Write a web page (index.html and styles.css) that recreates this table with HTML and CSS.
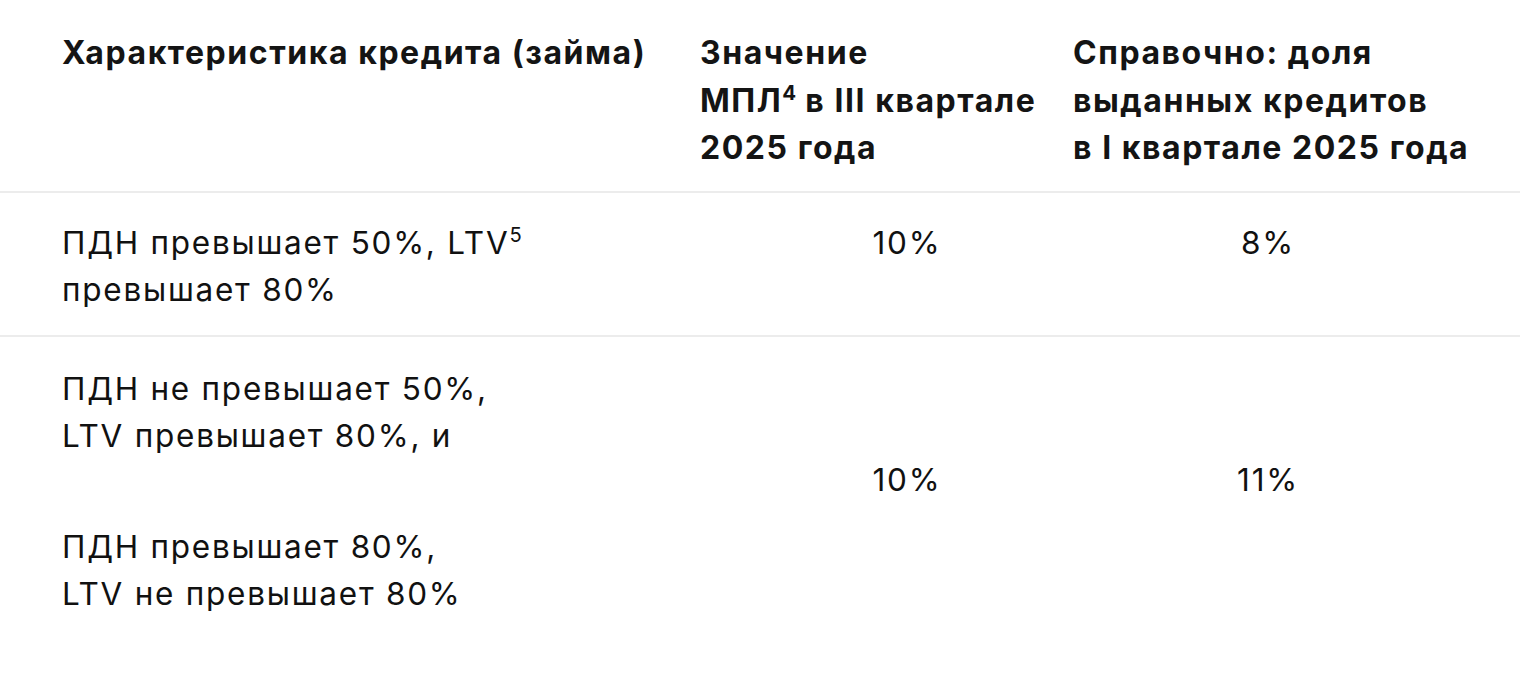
FILE: index.html
```html
<!DOCTYPE html>
<html lang="ru">
<head>
<meta charset="utf-8">
<title>МПЛ</title>
<link rel="stylesheet" href="styles.css">
</head>
<body>
<div class="table">
  <div class="row head">
    <div class="cell">Характеристика кредита (займа)</div>
    <div class="cell">Значение<br>МПЛ<sup>4</sup> в&nbsp;III квартале<br>2025 года</div>
    <div class="cell">Справочно: доля<br>выданных кредитов<br>в&nbsp;I квартале 2025 года</div>
  </div>
  <div class="row r1">
    <div class="cell">ПДН превышает 50%, LTV<sup>5</sup><br>превышает 80%</div>
    <div class="cell val v2">10%</div>
    <div class="cell val v3">8%</div>
  </div>
  <div class="row r2">
    <div class="cell">
      <p class="para">ПДН не превышает 50%,<br>LTV превышает 80%, и</p>
      <p class="para second">ПДН превышает 80%,<br>LTV не превышает 80%</p>
    </div>
    <div class="cell val v2 low">10%</div>
    <div class="cell val v3 low">11%</div>
  </div>
</div>
</body>
</html>
```

FILE: styles.css
```css
html, body {
  margin: 0;
  padding: 0;
  background: #ffffff;
}

body {
  font-family: Inter, "Noto Sans", sans-serif;
  color: #111111;
}

.table {
  display: flex;
  flex-direction: column;
}

.row {
  display: grid;
  grid-template-columns: 638px 373px 390px;
  padding-left: 62px;
  border-bottom: 2px solid #ececec;
  white-space: nowrap;
}

.row.r2 {
  border-bottom: none;
}

.head {
  font-weight: 700;
  font-size: 32px;
  letter-spacing: 1.55px;
  line-height: 47.5px;
  padding-top: 29px;
  padding-bottom: 19px;
  color: #141414;
}

.r1,
.r2 {
  font-size: 31.5px;
  letter-spacing: 1.75px;
  line-height: 47.5px;
}

.r1 {
  padding-top: 26px;
  padding-bottom: 21px;
}

.r2 {
  padding-top: 28px;
}

sup {
  font-size: 0.64em;
  line-height: 0;
  vertical-align: 0.6em;
  letter-spacing: 0;
}

.para {
  margin: 0;
}

.para.second {
  margin-top: 63px;
}

.val {
  text-align: center;
}

.v2 {
  padding-left: 41px;
}

.low {
  padding-top: 91px;
}
```
